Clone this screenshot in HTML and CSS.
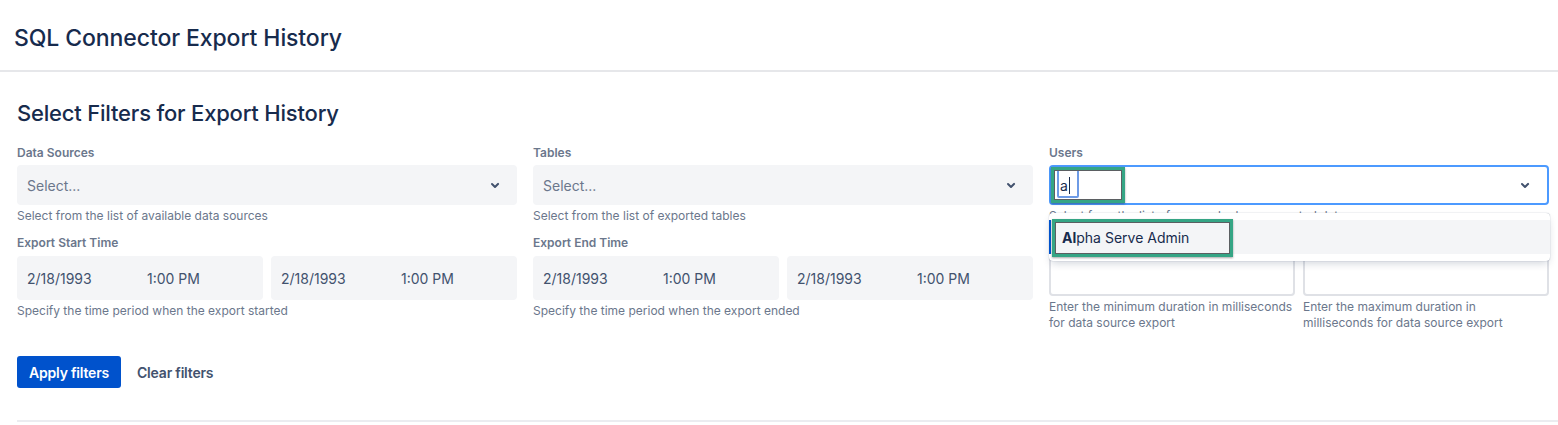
FILE: index.html
```html
<!DOCTYPE html>
<html lang="en">
<head>
<meta charset="utf-8">
<title>SQL Connector Export History</title>
<link rel="stylesheet" href="styles.css">
</head>
<body>
<header class="page-header">
  <h1 class="page-title">SQL Connector Export History</h1>
</header>
<main class="content">
  <h2 class="section-title">Select Filters for Export History</h2>
  <div class="filters">
    <div class="field">
      <label class="label">Data Sources</label>
      <div class="select">
        <span class="placeholder">Select...</span>
        <svg class="chevron" width="24" height="24" viewBox="0 0 24 24"><path d="M8.3 10.3a1 1 0 0 1 1.4 0l2.3 2.3 2.3-2.3a1 1 0 1 1 1.4 1.4l-3 3a1 1 0 0 1-1.4 0l-3-3a1 1 0 0 1 0-1.4z" fill="#42526e"/></svg>
      </div>
      <p class="help">Select from the list of available data sources</p>
    </div>
    <div class="field">
      <label class="label">Tables</label>
      <div class="select">
        <span class="placeholder">Select...</span>
        <svg class="chevron" width="24" height="24" viewBox="0 0 24 24"><path d="M8.3 10.3a1 1 0 0 1 1.4 0l2.3 2.3 2.3-2.3a1 1 0 1 1 1.4 1.4l-3 3a1 1 0 0 1-1.4 0l-3-3a1 1 0 0 1 0-1.4z" fill="#42526e"/></svg>
      </div>
      <p class="help">Select from the list of exported tables</p>
    </div>
    <div class="field">
      <label class="label">Users</label>
      <div class="select-wrap">
        <div class="select select-focused">
          <span class="typed">a<span class="caret"></span></span>
          <svg class="chevron" width="24" height="24" viewBox="0 0 24 24"><path d="M8.3 10.3a1 1 0 0 1 1.4 0l2.3 2.3 2.3-2.3a1 1 0 1 1 1.4 1.4l-3 3a1 1 0 0 1-1.4 0l-3-3a1 1 0 0 1 0-1.4z" fill="#42526e"/></svg>
          <span class="annot annot-input"></span>
        </div>
        <div class="menu">
          <div class="option"><span class="opt-text"><b>Al</b>pha Serve Admin</span><span class="annot annot-option"></span></div>
        </div>
      </div>
      <p class="help">Select from the list of users who have exported data</p>
    </div>

    <div class="field field-row2">
      <label class="label">Export Start Time</label>
      <div class="pair">
        <div class="date"><span class="d">2/18/1993</span><span class="t">1:00 PM</span></div>
        <div class="date"><span class="d">2/18/1993</span><span class="t">1:00 PM</span></div>
      </div>
      <p class="help">Specify the time period when the export started</p>
    </div>
    <div class="field field-row2">
      <label class="label">Export End Time</label>
      <div class="pair">
        <div class="date"><span class="d">2/18/1993</span><span class="t">1:00 PM</span></div>
        <div class="date"><span class="d">2/18/1993</span><span class="t">1:00 PM</span></div>
      </div>
      <p class="help">Specify the time period when the export ended</p>
    </div>
    <div class="field field-row2">
      <label class="label">Export Duration</label>
      <div class="pair">
        <div class="dur-col">
          <div class="text-input"></div>
          <p class="help">Enter the minimum duration in milliseconds for data source export</p>
        </div>
        <div class="dur-col">
          <div class="text-input"></div>
          <p class="help">Enter the maximum duration in milliseconds for data source export</p>
        </div>
      </div>
    </div>
  </div>
  <div class="actions">
    <button class="btn btn-primary">Apply filters</button>
    <button class="btn btn-subtle">Clear filters</button>
  </div>
  <div class="divider"></div>
</main>
</body>
</html>
```

FILE: styles.css
```css
* { box-sizing: border-box; }
html, body { margin: 0; padding: 0; background: #fff; }
body {
  font-family: Inter, "Noto Sans", "Liberation Sans", sans-serif;
  color: #172b4d;
  width: 1558px;
  height: 425px;
  overflow: hidden;
}
.page-header {
  height: 72px;
  padding: 0 14px;
  display: flex;
  align-items: center;
  border-bottom: 2px solid #e6e7ea;
}
.page-title {
  margin: 0;
  padding-top: 5px;
  font-size: 23px;
  font-weight: 500;
  line-height: 28px;
  color: #172b4d;
  letter-spacing: -0.1px;
}
.content {
  padding: 0 9px 0 17px;
}
.section-title {
  margin: 27px 0 0;
  font-size: 22px;
  font-weight: 500;
  line-height: 28px;
  color: #172b4d;
  letter-spacing: -0.2px;
}
.filters {
  margin-top: 18px;
  display: grid;
  grid-template-columns: 500px 500px 500px;
  column-gap: 16px;
}
.field { display: flex; flex-direction: column; }
.field-row2 { margin-top: 11px; }
.label {
  font-size: 12px;
  font-weight: 600;
  line-height: 16px;
  color: #6b778c;
  margin-bottom: 4px;
}
.field-row2 .label { margin-bottom: 5px; }
.select-wrap { position: relative; }
.select {
  position: relative;
  height: 40px;
  background: #f4f5f7;
  border-radius: 4px;
  display: flex;
  align-items: center;
  padding: 0 10px 0 10px;
}
.placeholder { font-size: 14px; color: #6b778c; flex: 1; }
.chevron { flex: none; }
.select-focused {
  background: #fff;
  border: 2px solid #4c9aff;
  padding-left: 6px;
}
.typed {
  position: relative;
  flex: 1;
  display: flex;
  align-items: center;
  font-size: 14px;
  color: #172b4d;
  padding-left: 3px;
}
.caret {
  display: inline-block;
  width: 1px;
  height: 17px;
  background: #172b4d;
  margin-left: 1px;
}
.typed::after {
  content: "";
  position: absolute;
  left: 0;
  top: -8px;
  width: 18px;
  height: 25px;
  border: 2px solid #6e9be6;
  border-radius: 2px;
}
.annot {
  position: absolute;
  border: 3px solid #35a585;
  box-shadow: inset 0 0 0 1px #5b5f62, 0 1px 2px rgba(0,0,0,0.35);
  pointer-events: none;
}
.annot-input { left: 0; top: 0; width: 74px; height: 36px; }
.menu {
  position: absolute;
  left: 0;
  right: -1px;
  top: 48px;
  background: #fff;
  border-radius: 4px;
  padding: 7px 0 7px;
  box-shadow: 0 4px 8px -2px rgba(9,30,66,0.2), 0 0 1px rgba(9,30,66,0.45);
  z-index: 5;
}
.option {
  position: relative;
  height: 34px;
  display: flex;
  align-items: center;
  padding-left: 13px;
  font-size: 14px;
  color: #172b4d;
  background: #f4f5f7;
  box-shadow: inset 2px 0 0 #0052cc;
}
.option b { font-weight: 700; }
.annot-option { left: 3px; top: -1px; width: 181px; height: 38px; }
.help {
  margin: 3px 0 0;
  font-size: 12px;
  line-height: 16px;
  color: #6b778c;
}
.pair {
  display: grid;
  grid-template-columns: 1fr 1fr;
  column-gap: 8px;
}
.date {
  height: 44px;
  background: #f4f5f7;
  border-radius: 4px;
  display: flex;
  align-items: center;
  padding-left: 10px;
  font-size: 14px;
  color: #42526e;
}
.date .d { width: 120px; }
.text-input {
  height: 40px;
  background: #fff;
  border: 2px solid #dfe1e6;
  border-radius: 4px;
}
.dur-col .help { margin-top: 3px; }
.actions {
  margin-top: 25px;
  display: flex;
  gap: 4px;
}
.btn {
  height: 32px;
  padding: 0 12px;
  border: 0;
  border-radius: 3px;
  font-family: inherit;
  font-size: 14px;
  font-weight: 600;
  letter-spacing: -0.2px;
  cursor: pointer;
}
.btn-primary { background: #0052cc; color: #fff; }
.btn-subtle { background: transparent; color: #42526e; padding-left: 12px; }
.divider {
  margin-top: 32px;
  margin-right: -9px;
  border-top: 2px solid #ebecf0;
}
```
